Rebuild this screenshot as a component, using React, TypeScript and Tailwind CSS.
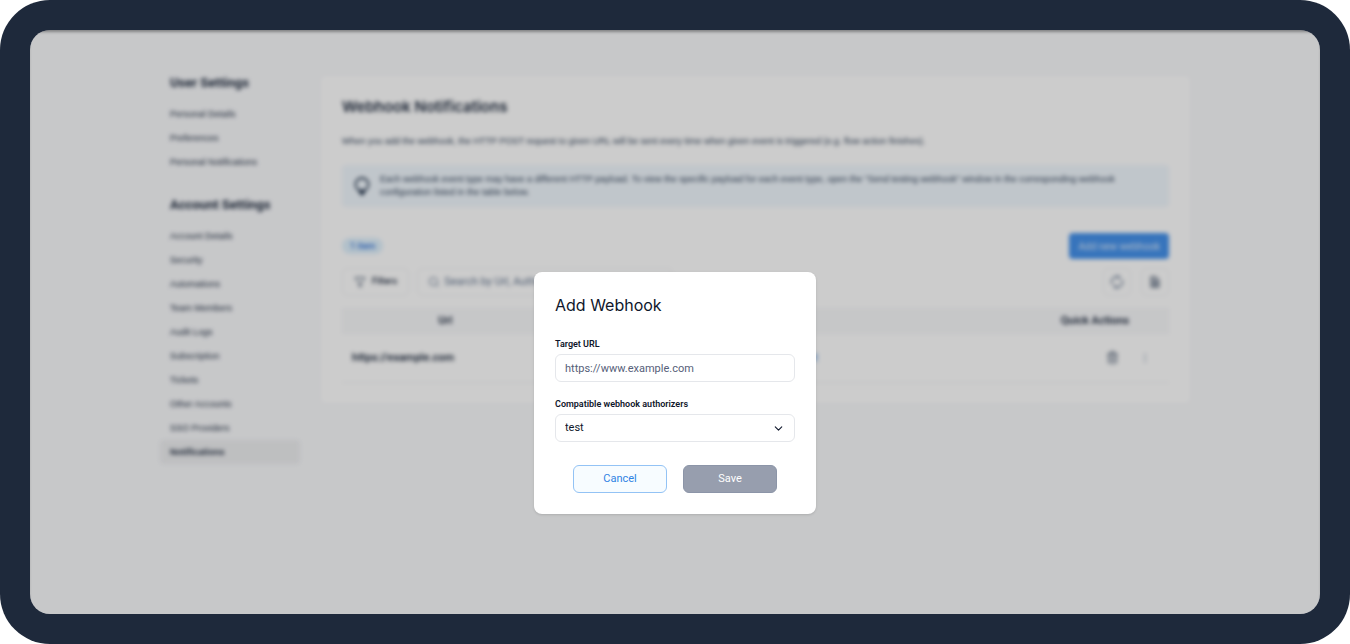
import { ChevronDown, EllipsisVertical, Funnel, Search, Trash2 } from "lucide-react";

const USER_LINKS = ["Personal Details", "Preferences", "Personal Notifications"];

const ACCOUNT_LINKS = [
  "Account Details",
  "Security",
  "Automations",
  "Team Members",
  "Audit Logs",
  "Subscription",
  "Tickets",
  "Other Accounts",
  "SSO Providers",
  "Notifications",
];

function BulbIcon() {
  return (
    <svg width="20" height="20" viewBox="0 0 20 20" fill="none" className="shrink-0">
      <circle cx="10" cy="8.5" r="6.5" stroke="currentColor" strokeWidth="1.8" />
      <path d="M5.5 13.5h9l-1.5 3-2 3H9l-2-3z" fill="currentColor" />
    </svg>
  );
}

function RefreshIcon() {
  return (
    <svg width="14" height="14" viewBox="0 0 14 14" fill="none" stroke="currentColor" strokeWidth="1.3">
      <path d="M2 9.2A5.4 5.4 0 0 1 9.2 2.1M12 4.8a5.4 5.4 0 0 1-7.2 7.1" />
      <path d="M7.6.8l2 1.4-1.4 1.9M6.4 13.2l-2-1.4 1.4-1.9" />
    </svg>
  );
}

function ExportIcon() {
  return (
    <svg width="10" height="12" viewBox="0 0 10 12" fill="none" stroke="currentColor">
      <path d="M1 .8h5L9 4v7.2H1z" fill="currentColor" fillOpacity="0.3" />
      <path d="M3 5h4M3 7h4M3 9h4" />
    </svg>
  );
}

function NavGroup({ title, links, active }: { title: string; links: string[]; active?: string }) {
  return (
    <div>
      <h2 className="mb-[9px] px-2.5 text-[13px] leading-5 font-bold text-slate-800">{title}</h2>
      <ul>
        {links.map((link) => (
          <li key={link}>
            <a
              href="#"
              className={`block rounded px-2.5 font-[Liberation_Sans] text-[9px] leading-6 text-slate-800 ${
                link === active ? "bg-[#eeeff1] font-semibold" : ""
              }`}
            >
              {link}
            </a>
          </li>
        ))}
      </ul>
    </div>
  );
}

function Sidebar() {
  return (
    <nav className="flex w-[140px] shrink-0 flex-col gap-[21px]">
      <NavGroup title="User Settings" links={USER_LINKS} />
      <NavGroup title="Account Settings" links={ACCOUNT_LINKS} active="Notifications" />
    </nav>
  );
}

function Toolbar() {
  return (
    <div className="mt-[9px] flex items-center gap-2">
      <button className="flex h-7 items-center gap-1.5 rounded-md border border-gray-100 px-[11px] text-[9px] font-medium text-slate-800">
        <Funnel size={12} className="text-slate-600" />
        Filters
      </button>
      <label className="flex h-7 w-64 items-center gap-1 rounded-md border border-gray-100 px-2.5">
        <Search size={12} className="shrink-0 text-slate-500" />
        <input
          aria-label="Search webhooks"
          placeholder="Search by Url, Authorizer"
          className="w-full bg-transparent text-[11px] outline-none placeholder:text-slate-500"
        />
      </label>
      <div className="ml-auto flex gap-2.5">
        <button aria-label="Refresh" className="flex size-7 items-center justify-center rounded-md border border-gray-100 text-slate-500">
          <RefreshIcon />
        </button>
        <button aria-label="Export" className="flex size-7 items-center justify-center rounded-md border border-gray-100 text-slate-600">
          <ExportIcon />
        </button>
      </div>
    </div>
  );
}

function WebhookTable() {
  return (
    <table className="mt-3 w-full table-fixed text-[11px] text-slate-800">
      <thead>
        <tr className="h-[26px] bg-[#f8f9fb]">
          <th className="w-1/4 font-semibold">Url</th>
          <th aria-label="Authorizer" />
          <th className="w-[148px] font-semibold">Quick Actions</th>
        </tr>
      </thead>
      <tbody>
        <tr className="h-12 border-b border-gray-100">
          <td className="px-2.5 font-semibold">https://example.com</td>
          <td className="text-center">
            <a href="#" className="ml-12 text-[#4592ec]">test</a>
          </td>
          <td>
            <div className="flex items-center justify-end gap-5 pr-[18px] text-slate-600">
              <button aria-label="Delete webhook">
                <Trash2 size={13} />
              </button>
              <button aria-label="More actions">
                <EllipsisVertical size={12} className="text-slate-400" />
              </button>
            </div>
          </td>
        </tr>
      </tbody>
    </table>
  );
}

function WebhooksCard() {
  return (
    <section className="mt-[3px] min-w-0 flex-1 rounded bg-white px-[21px] pt-[19px] pb-5">
      <h1 className="font-[Inter] text-[15px] leading-6 font-semibold text-slate-800">Webhook Notifications</h1>
      <p className="mt-3.5 font-[Liberation_Sans] text-[9px] leading-4 text-slate-700">
        When you add the webhook, the HTTP POST request to given URL will be sent every time when given event is
        triggered (e.g. flow action finishes).
      </p>
      <div className="mt-4 flex items-center gap-2 rounded bg-[#f1f8fe] px-2.5 py-2 text-slate-700">
        <BulbIcon />
        <p className="font-[Liberation_Sans] text-[9px] leading-[13px]">
          Each webhook event type may have a different HTTP payload. To view the specific payload for each event type,
          open the "Send testing webhook" window in the corresponding webhook configuration listed in the table below.
        </p>
      </div>
      <div className="mt-[26px] flex items-center justify-between">
        <span className="rounded-full bg-[#dff1fd] px-2 text-[9px] leading-4 font-medium text-[#2f6fd6]">1 item</span>
        <button className="h-[26px] rounded bg-[#4592ec] px-[9px] text-[10px] text-white/80">Add new webhook</button>
      </div>
      <Toolbar />
      <WebhookTable />
    </section>
  );
}

function AddWebhookDialog() {
  return (
    <form
      role="dialog"
      aria-labelledby="dialog-title"
      className="w-[282px] rounded-lg bg-white px-[21px] py-[21px] text-slate-900 shadow-sm"
    >
      <h2 id="dialog-title" className="font-[Inter] text-[16px] leading-6">
        Add Webhook
      </h2>
      <label htmlFor="target-url" className="mt-5 block text-[9px] leading-[14px] font-semibold">
        Target URL
      </label>
      <input
        id="target-url"
        type="url"
        placeholder="https://www.example.com"
        className="mt-[3px] block h-7 w-full rounded-md border border-gray-200 px-[9px] text-[11px] outline-none placeholder:text-[#566079]"
      />
      <label htmlFor="authorizer" className="mt-[15px] block text-[9px] leading-[14px] font-semibold">
        Compatible webhook authorizers
      </label>
      <div className="relative mt-[3px]">
        <select
          id="authorizer"
          className="block h-7 w-full appearance-none rounded-md border border-gray-200 bg-white px-[9px] text-[11px] outline-none"
        >
          <option>test</option>
        </select>
        <ChevronDown size={13} className="pointer-events-none absolute top-2 right-2.5" />
      </div>
      <div className="mt-[23px] flex justify-center gap-4">
        <button
          type="button"
          className="h-7 w-[94px] rounded-md border border-[#93c3f5] bg-[#f7fcff] text-[11px] text-[#2f83e4]"
        >
          Cancel
        </button>
        <button
          type="submit"
          className="h-7 w-[94px] rounded-md border border-[#8c95a8] bg-[#979eae] text-[11px] text-white"
        >
          Save
        </button>
      </div>
    </form>
  );
}

export default function App() {
  return (
    <div className="flex min-h-screen rounded-[50px] bg-[#1e293b] p-[30px] font-[Roboto,sans-serif]">
      <main className="relative flex-1 overflow-hidden rounded-[20px] bg-[#f9fafc]">
        <div className="mx-auto flex max-w-[1030px] items-start gap-[21px] pt-[43px] blur-[2px]">
          <Sidebar />
          <WebhooksCard />
        </div>
        <div className="absolute inset-0 flex items-start justify-center bg-black/20 pt-[242px] shadow-[inset_0_3px_3px_-1px_rgba(0,0,0,0.35)]">
          <AddWebhookDialog />
        </div>
      </main>
    </div>
  );
}
